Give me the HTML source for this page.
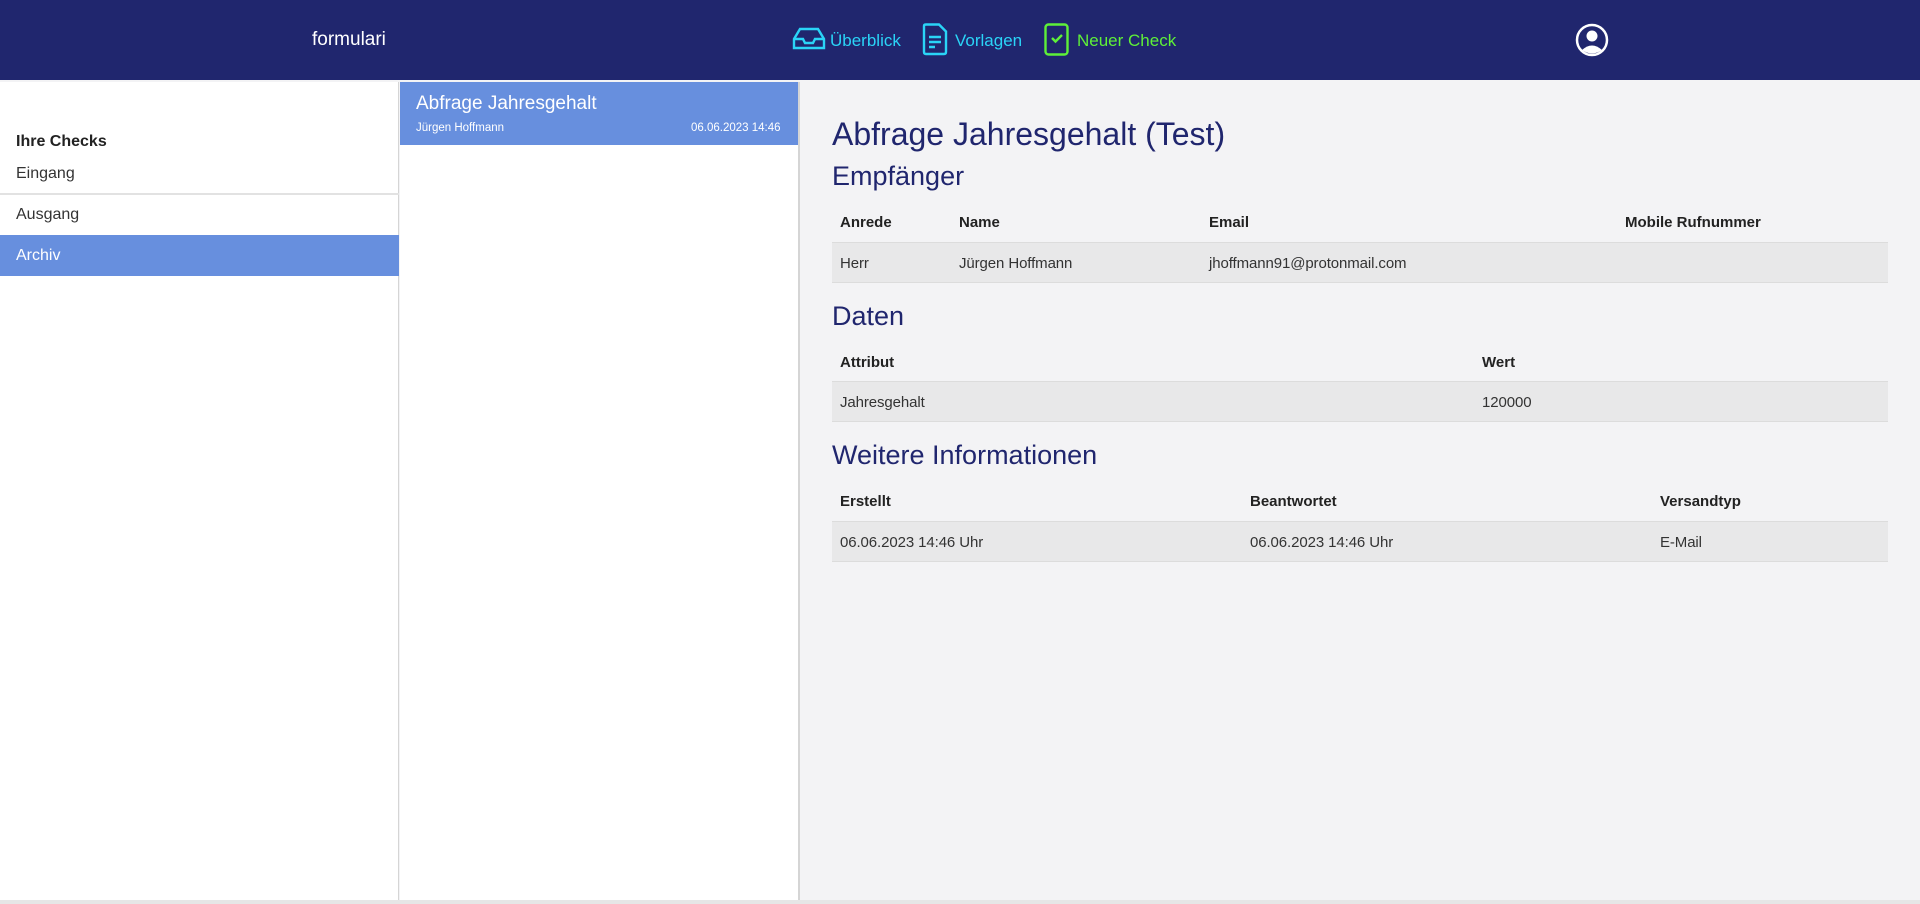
<!DOCTYPE html>
<html><head><meta charset="utf-8"><style>
*{margin:0;padding:0;box-sizing:border-box}
body{width:1920px;height:904px;background:#f3f3f5;font-family:"Liberation Sans",sans-serif;position:relative;overflow:hidden;color:#222}
.a{position:absolute;white-space:nowrap}
#hdr{position:absolute;left:0;top:0;width:1920px;height:80px;background:#20266e}
.h1{color:#20266e;font-size:32px}
.h2{color:#20266e;font-size:27px}
.th{font-weight:bold;font-size:15px;color:#222}
.td{font-size:15px;color:#333;letter-spacing:-0.1px}
.row{position:absolute;left:832px;width:1056px;height:41px;background:#e8e8e9;border-top:1px solid #dcdcdc;border-bottom:1px solid #dcdcdc}
</style></head><body>
<div id="hdr"></div>
<div class="a" style="left:312px;top:29px;font-size:19px;color:#fff">formulari</div>
<svg class="a" style="left:792px;top:27px" width="34" height="24" viewBox="0 0 34 24" fill="none" stroke="#2ad4f7" stroke-width="2.4"><path d="M2 12 L8 2 H26 L32 12 V21 H2 Z M2 12 H11 L13 16 H21 L23 12 H32"/></svg>
<div class="a" style="left:830px;top:31px;font-size:17px;color:#2ad4f7">Überblick</div>
<svg class="a" style="left:922px;top:23px" width="26" height="33" viewBox="0 0 26 33" fill="none" stroke="#2ad4f7" stroke-width="2.4"><path d="M2 3 Q2 1.5 4 1.5 H17 L24 8.5 V29 Q24 31 22 31 H4 Q2 31 2 29 Z"/><path d="M7 14 H19 M7 19 H19 M7 24 H13"/></svg>
<div class="a" style="left:955px;top:31px;font-size:17px;color:#2ad4f7">Vorlagen</div>
<svg class="a" style="left:1044px;top:23px" width="26" height="33" viewBox="0 0 26 33" fill="none" stroke="#5ef038" stroke-width="2.4"><rect x="1.5" y="1.5" width="22" height="30" rx="3"/><path d="M8 15 L11.5 18.5 L18 12"/></svg>
<div class="a" style="left:1077px;top:31px;font-size:17px;color:#5ef038">Neuer Check</div>
<svg class="a" style="left:1575px;top:23px" width="34" height="34" viewBox="0 0 34 34"><circle cx="17" cy="17" r="15" fill="none" stroke="#fff" stroke-width="2.5"/><circle cx="17" cy="13" r="5.5" fill="#fff"/><path d="M7 27 Q17 18 27 27 Q17 34 7 27Z" fill="#fff"/></svg>

<div class="a" style="left:0;top:82px;width:399px;height:818px;background:#fff;border-right:1px solid #d5d5d5"></div>
<div class="a" style="left:16px;top:133px;font-size:16px;font-weight:bold">Ihre Checks</div>
<div class="a" style="left:16px;top:165px;font-size:16px;color:#333">Eingang</div>
<div class="a" style="left:0;top:193px;width:399px;height:2px;background:#e2e2e2"></div>
<div class="a" style="left:16px;top:206px;font-size:16px;color:#333">Ausgang</div>
<div class="a" style="left:0;top:235px;width:399px;height:41px;background:#678fde"></div>
<div class="a" style="left:16px;top:247px;font-size:16px;color:#fff">Archiv</div>

<div class="a" style="left:400px;top:82px;width:400px;height:818px;background:#fff;border-right:2px solid #d5d5d5"></div>
<div class="a" style="left:400px;top:82px;width:398px;height:63px;background:#678fde"></div>
<div class="a" style="left:416px;top:93px;font-size:19px;color:#fff">Abfrage Jahresgehalt</div>
<div class="a" style="left:416px;top:122px;font-size:11.5px;color:#fff">Jürgen Hoffmann</div>
<div class="a" style="left:691px;top:122px;font-size:11.5px;color:#fff">06.06.2023 14:46</div>
<div class="a" style="left:0;top:900px;width:1920px;height:4px;background:#e6e6e6"></div>

<div class="a h1" style="left:832px;top:116px">Abfrage Jahresgehalt (Test)</div>
<div class="a h2" style="left:832px;top:161px">Empfänger</div>
<div class="a th" style="left:840px;top:214px">Anrede</div>
<div class="a th" style="left:959px;top:214px">Name</div>
<div class="a th" style="left:1209px;top:214px">Email</div>
<div class="a th" style="left:1625px;top:214px">Mobile Rufnummer</div>
<div class="row" style="top:242px"></div>
<div class="a td" style="left:840px;top:255px">Herr</div>
<div class="a td" style="left:959px;top:255px">Jürgen Hoffmann</div>
<div class="a td" style="left:1209px;top:255px">jhoffmann91@protonmail.com</div>

<div class="a h2" style="left:832px;top:301px">Daten</div>
<div class="a th" style="left:840px;top:354px">Attribut</div>
<div class="a th" style="left:1482px;top:354px">Wert</div>
<div class="row" style="top:381px"></div>
<div class="a td" style="left:840px;top:394px">Jahresgehalt</div>
<div class="a td" style="left:1482px;top:394px">120000</div>

<div class="a h2" style="left:832px;top:440px">Weitere Informationen</div>
<div class="a th" style="left:840px;top:493px">Erstellt</div>
<div class="a th" style="left:1250px;top:493px">Beantwortet</div>
<div class="a th" style="left:1660px;top:493px">Versandtyp</div>
<div class="row" style="top:521px"></div>
<div class="a td" style="left:840px;top:534px">06.06.2023 14:46 Uhr</div>
<div class="a td" style="left:1250px;top:534px">06.06.2023 14:46 Uhr</div>
<div class="a td" style="left:1660px;top:534px">E-Mail</div>
</body></html>
